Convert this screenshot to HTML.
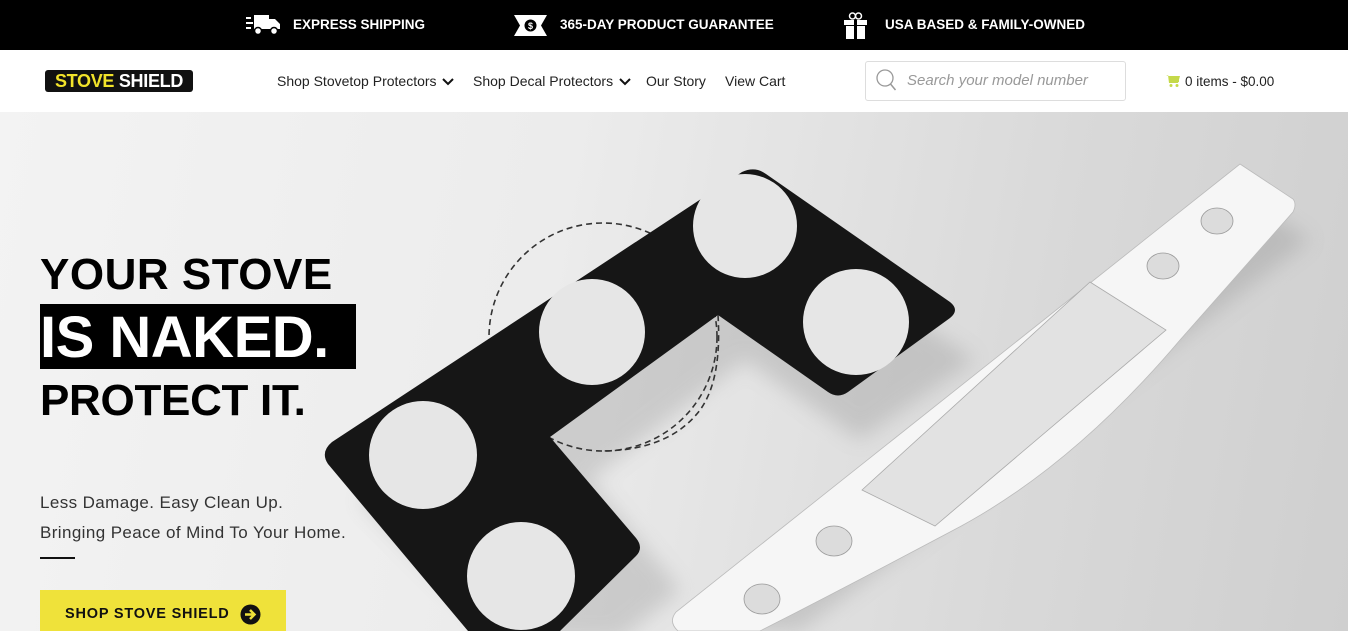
<!DOCTYPE html>
<html><head><meta charset="utf-8">
<style>
*{margin:0;padding:0;box-sizing:border-box}
body{width:1348px;height:631px;overflow:hidden;font-family:"Liberation Sans",sans-serif;background:#fff;position:relative}
.top{height:50px;background:#000;color:#fff;position:relative}
.top .it{position:absolute;top:17px;font-size:13.5px;font-weight:bold;letter-spacing:0}
.nav{height:62px;position:relative;background:#fff}
.logo{position:absolute;left:45px;top:70px;width:148px;height:22px;background:#111;border-radius:3px;font-weight:bold;font-size:18px;line-height:22px;text-align:center;letter-spacing:-0.3px}
.menu{position:absolute;top:73px;font-size:14px;color:#222}
.hero{position:absolute;top:112px;left:0;width:1348px;height:519px;background:linear-gradient(100deg,#f3f3f3 0%,#ececec 40%,#d9d9d9 75%,#cfcfcf 100%);overflow:hidden}
.h1{position:absolute;left:40px;font-weight:900;font-size:44px;color:#000;letter-spacing:0.5px;line-height:1}
</style></head><body>
<div class="top">
 <svg style="position:absolute;left:246px;top:14px" width="35" height="22" viewBox="0 0 35 22"><rect x="0" y="3" width="5" height="2" fill="#fff"/><rect x="0" y="8" width="7" height="2" fill="#fff"/><rect x="0" y="13" width="5" height="2" fill="#fff"/><path d="M8 1h15v14H8z M23 5h6l5 5v5H23z" fill="#fff"/><circle cx="12" cy="17" r="3.5" fill="#fff" stroke="#000" stroke-width="1.5"/><circle cx="28" cy="17" r="3.5" fill="#fff" stroke="#000" stroke-width="1.5"/></svg>
 <span class="it" style="left:293px">EXPRESS SHIPPING</span>
 <svg style="position:absolute;left:514px;top:15px" width="33" height="21" viewBox="0 0 33 21"><rect width="33" height="21" fill="#fff"/><path d="M0 0l6 10.5L0 21z M33 0l-6 10.5L33 21z" fill="#000"/><circle cx="16.5" cy="10.5" r="6" fill="#000"/><text x="16.5" y="14" font-size="9" fill="#fff" text-anchor="middle" font-family="Liberation Sans" font-weight="bold">$</text></svg>
 <span class="it" style="left:560px">365-DAY PRODUCT GUARANTEE</span>
 <svg style="position:absolute;left:844px;top:12px" width="23" height="27" viewBox="0 0 23 27"><circle cx="8.5" cy="4" r="3" fill="none" stroke="#fff" stroke-width="1.5"/><circle cx="14.5" cy="4" r="3" fill="none" stroke="#fff" stroke-width="1.5"/><rect x="0" y="8" width="23" height="5" fill="#fff"/><rect x="2" y="14" width="19" height="13" fill="#fff"/><rect x="10" y="8" width="3" height="19" fill="#000"/></svg>
 <span class="it" style="left:885px">USA BASED &amp; FAMILY-OWNED</span>
</div>
<div class="nav"></div>
<div class="logo"><span style="color:#f2e32a">STOVE</span> <span style="color:#fff">SHIELD</span></div>
<div class="menu" style="left:277px">Shop Stovetop Protectors <svg width="12" height="8" viewBox="0 0 12 8" style="margin-left:2px"><path d="M1 1l5 5 5-5" stroke="#111" stroke-width="2" fill="none"/></svg></div>
<div class="menu" style="left:473px">Shop Decal Protectors <svg width="12" height="8" viewBox="0 0 12 8" style="margin-left:2px"><path d="M1 1l5 5 5-5" stroke="#111" stroke-width="2" fill="none"/></svg></div>
<div class="menu" style="left:646px">Our Story</div>
<div class="menu" style="left:725px">View Cart</div>
<div style="position:absolute;left:865px;top:61px;width:261px;height:40px;border:1px solid #ddd;border-radius:3px"></div>
<svg style="position:absolute;left:876px;top:69px" width="22" height="24" viewBox="0 0 22 24"><circle cx="9" cy="9" r="8" fill="none" stroke="#999" stroke-width="1.3"/><path d="M14.5 15l5 6" stroke="#999" stroke-width="1.5"/></svg>
<div style="position:absolute;left:907px;top:72px;font-size:15px;font-style:italic;color:#999">Search your model number</div>
<svg style="position:absolute;left:1166px;top:74px" width="14" height="13" viewBox="0 0 14 13"><path d="M0 1h2l1 8h9l2-7H3" fill="#c5d94a"/><rect x="3" y="2" width="10" height="6" fill="#c5d94a"/><circle cx="5" cy="11.5" r="1.5" fill="#c5d94a"/><circle cx="11" cy="11.5" r="1.5" fill="#c5d94a"/></svg>
<div style="position:absolute;left:1185px;top:74px;font-size:13.5px;color:#222">0 items - $0.00</div>

<div class="hero">
<svg width="1348" height="519" viewBox="0 112 1348 519" style="position:absolute;left:0;top:0">
 <defs><filter id="b"><feGaussianBlur stdDeviation="10"/></filter></defs>
 <g filter="url(#b)" opacity="0.25"><path d="M1250 200 L1310 240 L800 631 L710 631Z" fill="#777"/><path d="M360 500 L770 220 L975 360 L860 440 L745 360 L590 480 L680 590 L620 640 L500 640Z" fill="#777"/></g>
 <circle cx="603" cy="337" r="114" fill="none" stroke="#333" stroke-width="1.6" stroke-dasharray="6 4"/>
 <path d="M332 442 L742 172 Q755 166 766 174 L950 302 Q960 310 950 318 L848 392 Q838 399 828 392 L718 315 L550 437 L636 538 Q644 548 636 556 L560 631 L468 631 L328 464 Q320 452 332 442Z" fill="#161616"/>
 <g fill="#e6e6e6">
  <circle cx="745" cy="226" r="52"/><circle cx="856" cy="322" r="53"/><circle cx="592" cy="332" r="53"/><circle cx="423" cy="455" r="54"/><circle cx="521" cy="576" r="54"/>
 </g>
 <path d="M718 315 Q722 380 700 410 Q670 450 603 451" fill="none" stroke="#333" stroke-width="1.6" stroke-dasharray="6 4"/>
 <path d="M1240 164 L1293 199 Q1297 204 1293 212 L1180 340 Q1070 470 950 532 Q850 585 760 631 L678 631 Q668 622 676 612 Z" fill="#f6f6f6" stroke="#bbb" stroke-width="0.8"/>
 <path d="M1090 282 L1166 330 L935 526 L862 490 Z" fill="#e2e2e2" stroke="#aaa" stroke-width="0.8"/>
 <g fill="#dcdcdc" stroke="#999" stroke-width="0.8"><ellipse cx="1217" cy="221" rx="16" ry="13"/><ellipse cx="1163" cy="266" rx="16" ry="13"/><ellipse cx="834" cy="541" rx="18" ry="15"/><ellipse cx="762" cy="599" rx="18" ry="15"/></g>
</svg>
<div class="h1" style="top:141px">YOUR STOVE</div>
<div style="position:absolute;left:40px;top:192px;width:316px;height:65px;background:#000"></div>
<div class="h1" style="top:197px;color:#fff;font-size:58px;letter-spacing:-0.5px">IS NAKED.</div>
<div class="h1" style="top:267px;letter-spacing:-0.3px">PROTECT IT.</div>
<div style="position:absolute;left:40px;top:381px;font-size:17px;color:#333;letter-spacing:0.4px">Less Damage. Easy Clean Up.</div>
<div style="position:absolute;left:40px;top:411px;font-size:17px;color:#333;letter-spacing:0.4px">Bringing Peace of Mind To Your Home.</div>
<div style="position:absolute;left:40px;top:445px;width:35px;height:2px;background:#111"></div>
<div style="position:absolute;left:40px;top:478px;width:246px;height:45px;background:#efe23a"></div>
<div style="position:absolute;left:65px;top:494px;font-size:14.5px;font-weight:bold;letter-spacing:0.8px;color:#111">SHOP STOVE SHIELD</div>
<svg style="position:absolute;left:240px;top:492px" width="21" height="21" viewBox="0 0 21 21"><circle cx="10.5" cy="10.5" r="10" fill="#111"/><path d="M5 10.5h9M10 6l4.5 4.5L10 15" stroke="#efe23a" stroke-width="2.5" fill="none"/></svg>
</div>
</body></html>
